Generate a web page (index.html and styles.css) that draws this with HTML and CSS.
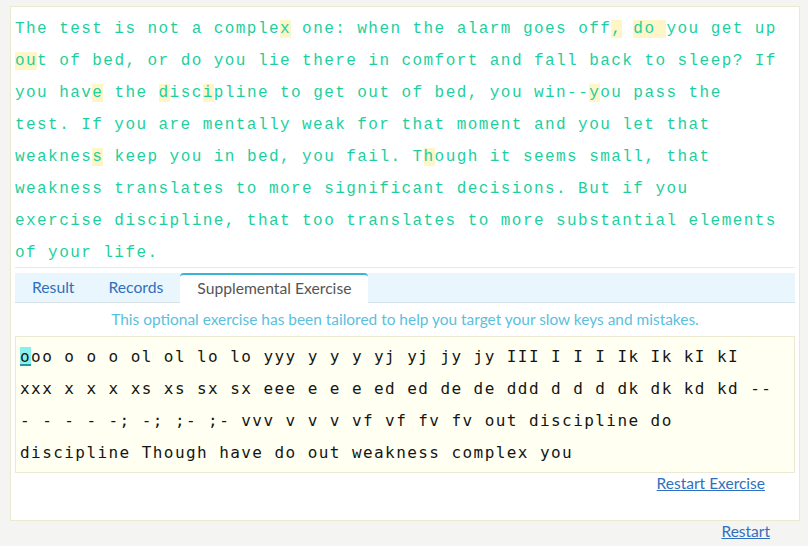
FILE: index.html
```html
<!DOCTYPE html>
<html lang="en">
<head>
<meta charset="utf-8">
<title>Typing test</title>
<link rel="stylesheet" href="styles.css">
</head>
<body>
<div class="card">
  <div class="passage">The test is not a comple<span class="err">x</span> one: when the alarm goes off<span class="err">,</span> <span class="err">do </span>you get up<br><span class="err">ou</span>t of bed, or do you lie there in comfort and fall back to sleep? If<br>you hav<span class="err">e</span> the <span class="err">d</span>isc<span class="err">i</span>pline to get out of bed, you win--<span class="err">y</span>ou pass the<br>test. If you are mentally weak for that moment and you let that<br>weaknes<span class="err">s</span> keep you in bed, you fail. T<span class="err">h</span>ough it seems small, that<br>weakness translates to more significant decisions. But if you<br>exercise discipline, that too translates to more substantial elements<br>of your life.</div>
  <div class="tabs">
    <a class="tab">Result</a>
    <a class="tab">Records</a>
    <a class="tab active">Supplemental Exercise</a>
  </div>
  <p class="info">This optional exercise has been tailored to help you target your slow keys and mistakes.</p>
  <div class="exercise"><span class="cursor">o</span>oo o o o ol ol lo lo yyy y y y yj yj jy jy III I I I Ik Ik kI kI<br>xxx x x x xs xs sx sx eee e e e ed ed de de ddd d d d dk dk kd kd --<br>- - - - -; -; ;- ;- vvv v v v vf vf fv fv out discipline do<br>discipline Though have do out weakness complex you</div>
  <div class="exercise-actions"><a class="link" href="#">Restart Exercise</a></div>
</div>
<div class="page-actions"><a class="link" href="#">Restart</a></div>
</body>
</html>
```

FILE: styles.css
```css
html, body {
  margin: 0;
  padding: 0;
}
body {
  background: #f4f4f2;
  font-family: Lato, "Open Sans", sans-serif;
  width: 808px;
  height: 546px;
  overflow: hidden;
}
.card {
  box-sizing: border-box;
  width: 790px;
  margin: 6px 0 0 10px;
  background: #ffffff;
  border: 1px solid #ebe9d2;
  padding: 4px 4px 4px 4px;
}
.passage {
  height: 254px;
  padding-top: 2px;
  font-family: "Liberation Mono", monospace;
  font-size: 16px;
  letter-spacing: 1.44px;
  line-height: 32px;
  color: #1dcf9e;
  white-space: nowrap;
  border-bottom: 1px solid #dfeced;
}
.err {
  background: #fff6c8;
}
.tabs {
  display: flex;
  margin-top: 5px;
  height: 29px;
  background: #eaf6fd;
  border-bottom: 1px solid #d8e1e6;
}
.tab {
  display: block;
  padding: 0 17px;
  font-size: 15.7px;
  line-height: 29px;
  color: #2f6fbf;
  cursor: pointer;
}
.tab.active {
  box-sizing: border-box;
  height: 30px;
  margin-bottom: -1px;
  background: #ffffff;
  color: #555555;
  border-top: 2px solid #3ab4d4;
  border-radius: 4px 4px 0 0;
  line-height: 27px;
}
.info {
  margin: 0;
  padding: 6px 0;
  text-align: center;
  font-size: 15.45px;
  line-height: 21px;
  color: #5bc0de;
}
.exercise {
  background: #fffff2;
  border: 1px solid #ebe9d2;
  padding: 4px 4px 3px 4px;
  font-family: "DejaVu Sans Mono", monospace;
  font-size: 16px;
  letter-spacing: 1.43px;
  line-height: 32px;
  color: #151515;
  white-space: nowrap;
}
.cursor {
  background: #86f2f0;
  box-shadow: inset 0 -2px 0 #1b9aa0;
}
.exercise-actions {
  text-align: right;
  padding-right: 30px;
  margin-bottom: 22px;
  font-size: 15.5px;
  line-height: 21px;
}
.page-actions {
  text-align: right;
  padding-right: 38px;
  font-size: 15.5px;
  line-height: 21px;
}
.link {
  color: #2f6fbf;
  text-decoration: underline;
}
```
